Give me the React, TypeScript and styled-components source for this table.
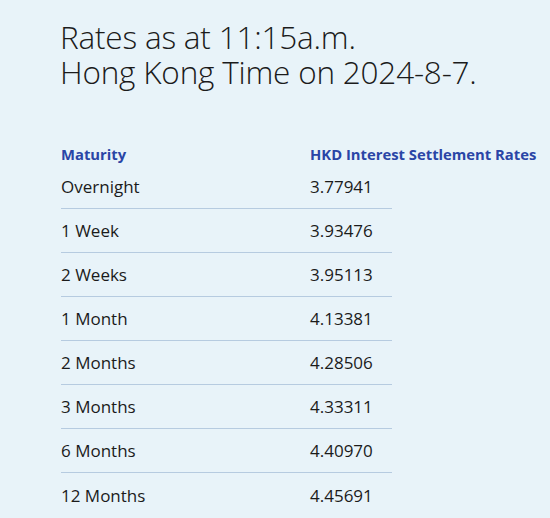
import styled, { createGlobalStyle } from "styled-components";

const GlobalStyle = createGlobalStyle`
  html, body {
    margin: 0;
    padding: 0;
    background: #e8f3f9;
  }
  body {
    font-family: "Open Sans", "Noto Sans", sans-serif;
    color: #1b1b1b;
  }
`;

const rates = [
  { maturity: "Overnight", rate: "3.77941" },
  { maturity: "1 Week", rate: "3.93476" },
  { maturity: "2 Weeks", rate: "3.95113" },
  { maturity: "1 Month", rate: "4.13381" },
  { maturity: "2 Months", rate: "4.28506" },
  { maturity: "3 Months", rate: "4.33311" },
  { maturity: "6 Months", rate: "4.40970" },
  { maturity: "12 Months", rate: "4.45691" },
];

export default function App() {
  return (
    <>
      <GlobalStyle />
      <Page>
        <Title>
          Rates as at 11:15a.m.
          <br />
          Hong Kong Time on 2024-8-7.
        </Title>
        <Table>
          <HeaderRow>
            <HeaderCell>Maturity</HeaderCell>
            <HeaderCell>HKD Interest Settlement Rates</HeaderCell>
          </HeaderRow>
          {rates.map((r, i) => (
            <Row key={r.maturity} $last={i === rates.length - 1}>
              <Cell>{r.maturity}</Cell>
              <Cell>{r.rate}</Cell>
            </Row>
          ))}
        </Table>
      </Page>
    </>
  );
}

const Page = styled.main`
  padding: 19px 0 0 61px;
  min-height: 518px;
  box-sizing: border-box;
`;

const Title = styled.h1`
  margin: 0 0 54px -1px;
  font-weight: 300;
  font-size: 31.5px;
  line-height: 35px;
  letter-spacing: -0.2px;
`;

const Table = styled.div`
  width: 331px;
`;

const HeaderRow = styled.div`
  display: grid;
  grid-template-columns: 249px 82px;
  height: 22px;
  align-items: center;
`;

const HeaderCell = styled.div`
  font-weight: 700;
  font-size: 14.8px;
  color: #2a45a6;
  white-space: nowrap;
`;

const Row = styled.div<{ $last?: boolean }>`
  display: grid;
  grid-template-columns: 249px 82px;
  height: 44px;
  align-items: center;
  box-sizing: border-box;
  border-bottom: ${(p) => (p.$last ? "none" : "1px solid #b6cbe0")};
`;

const Cell = styled.div`
  font-size: 17px;
  white-space: nowrap;
`;
